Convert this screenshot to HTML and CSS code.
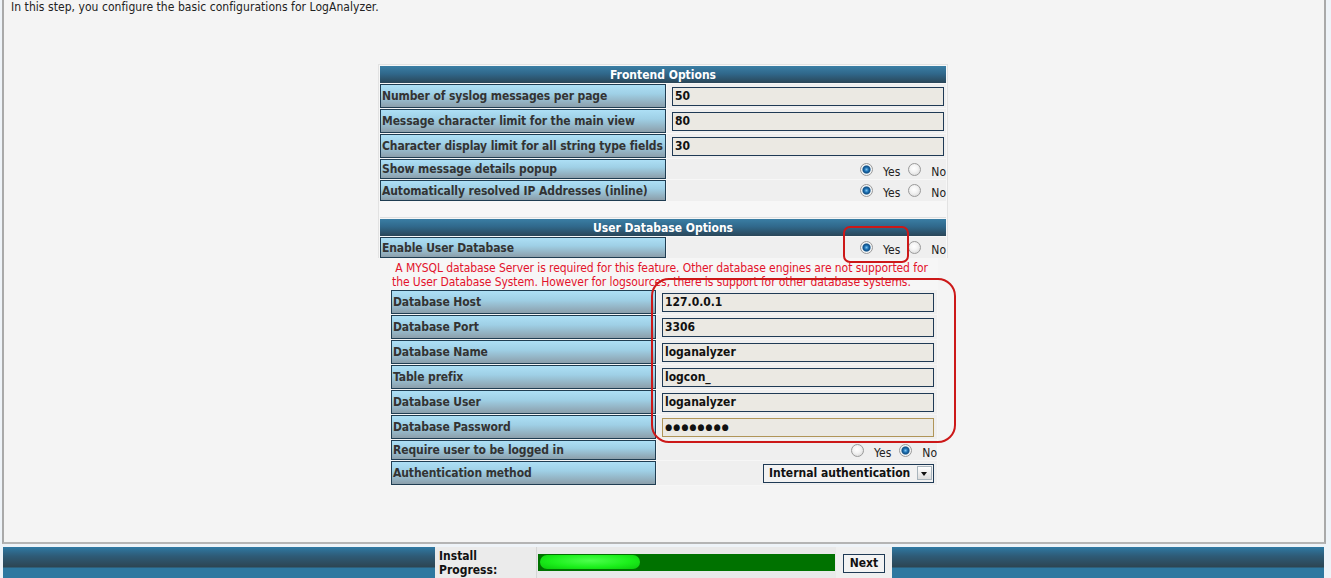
FILE: index.html
```html
<!DOCTYPE html>
<html>
<head>
<meta charset="utf-8">
<title>LogAnalyzer Install</title>
<link rel="stylesheet" href="styles.css">
</head>
<body>
<div class="panel">
  <p class="intro">In this step, you configure the basic configurations for LogAnalyzer.</p>
  <div class="wrap">
    <div class="box">
      <div class="hdr">Frontend Options</div>
      <div class="row"><div class="lbl">Number of syslog messages per page</div><div class="val"><span class="inp">50</span></div></div>
      <div class="row"><div class="lbl">Message character limit for the main view</div><div class="val"><span class="inp">80</span></div></div>
      <div class="row"><div class="lbl">Character display limit for all string type fields</div><div class="val"><span class="inp">30</span></div></div>
      <div class="row r20"><div class="lbl">Show message details popup</div><div class="val radios"><span class="rb on"></span><span class="t">Yes</span><span class="rb"></span><span class="t">No</span></div></div>
      <div class="row r21"><div class="lbl">Automatically resolved IP Addresses (inline)</div><div class="val radios"><span class="rb on"></span><span class="t">Yes</span><span class="rb"></span><span class="t">No</span></div></div>
      <div class="spacer"></div>
      <div class="hdr">User Database Options</div>
      <div class="row r21"><div class="lbl">Enable User Database</div><div class="val radios"><span class="rb on"></span><span class="t">Yes</span><span class="rb"></span><span class="t">No</span></div></div>
    </div>
    <div class="nested">
      <div class="warn">&nbsp;A MYSQL database Server is required for this feature. Other database engines are not supported for<br>the User Database System. However for logsources, there is support for other database systems.</div>
      <div class="row"><div class="lbl">Database Host</div><div class="val"><span class="inp">127.0.0.1</span></div></div>
      <div class="row"><div class="lbl">Database Port</div><div class="val"><span class="inp">3306</span></div></div>
      <div class="row"><div class="lbl">Database Name</div><div class="val"><span class="inp">loganalyzer</span></div></div>
      <div class="row"><div class="lbl">Table prefix</div><div class="val"><span class="inp">logcon_</span></div></div>
      <div class="row"><div class="lbl">Database User</div><div class="val"><span class="inp">loganalyzer</span></div></div>
      <div class="row"><div class="lbl">Database Password</div><div class="val"><span class="inp pw">&#9679;&#9679;&#9679;&#9679;&#9679;&#9679;&#9679;&#9679;</span></div></div>
      <div class="row r20"><div class="lbl">Require user to be logged in</div><div class="val radios"><span class="rb"></span><span class="t">Yes</span><span class="rb on"></span><span class="t">No</span></div></div>
      <div class="row"><div class="lbl">Authentication method</div><div class="val selcell"><span class="sel"><span class="seltext">Internal authentication</span><span class="arrow"></span></span></div></div>
    </div>
  </div>
</div>
<div class="footer">
  <div class="progress">
    <div class="plabel">Install<br>Progress:</div>
    <div class="pcell"><div class="bar"><div class="fill"></div></div></div>
    <div class="ncell"><span class="next">Next</span></div>
  </div>
</div>
<div class="mark m1"></div>
<div class="mark m2"></div>
</body>
</html>
```
FILE: styles.css
```css
html, body { margin: 0; padding: 0; }
body {
  background: #eef3f8;
  font-family: "DejaVu Sans Condensed", "DejaVu Sans", sans-serif;
  font-size: 12px;
  color: #222;
  position: relative;
  height: 578px;
  overflow: hidden;
}
.panel {
  margin: 0 5px 0 2px;
  height: 544px;
  box-sizing: border-box;
  border-left: 2px solid #a9a9a9;
  border-right: 2px solid #a9a9a9;
  border-bottom: 2px solid #b4b4b4;
  background: #f4f4f4;
}
.intro { margin: 0; padding-left: 7px; line-height: 14px; letter-spacing: 0.05px; }
.wrap { width: 572px; margin: 50px auto 0; }
.box {
  width: 570px;
  box-sizing: border-box;
  border: 1px solid #e2e2e2;
  border-bottom: none;
  padding: 1px 1px 0 1px;
  background: #f7f7f7;
  display: flex;
  flex-direction: column;
  gap: 1px;
}
.hdr {
  height: 17px;
  line-height: 18px;
  text-align: center;
  color: #fff;
  font-weight: bold;
  background: linear-gradient(to bottom, #3a7ea4 0%, #30688b 45%, #2a4658 100%);
}
.row { display: flex; gap: 1px; height: 24px; }
.row.r20 { height: 20px; }
.row.r21 { height: 21px; }
.lbl {
  width: 286px;
  flex: none;
  box-sizing: border-box;
  border: 1px solid #1f3d52;
  background: linear-gradient(to bottom, #addff5 0%, #9fd0e6 40%, #8c9fab 100%);
  padding-left: 1px;
  font-weight: bold;
  letter-spacing: -0.1px;
  color: #333;
  display: flex;
  align-items: center;
  white-space: nowrap;
  overflow: hidden;
}
.val {
  flex: 1;
  background: #efefef;
  display: flex;
  align-items: center;
  padding-left: 5px;
}
.inp {
  width: 272px;
  height: 19px;
  box-sizing: border-box;
  border: 1px solid #1f3a55;
  background: #ebe9e3;
  font-weight: bold;
  color: #111;
  line-height: 17px;
  padding-left: 2px;
  white-space: nowrap;
}
.inp.pw { border-color: #b09558; font-size: 9px; letter-spacing: 1px; }
.spacer { height: 15px; border-bottom: 1px solid #e0e0e0; }
.radios { justify-content: flex-end; padding-left: 0; }
.rb {
  width: 13px;
  height: 13px;
  box-sizing: border-box;
  border-radius: 50%;
  border: 1px solid #9a9a9a;
  background: radial-gradient(circle at 45% 40%, #ffffff 0, #f4f4f4 40%, #d2d2d2 100%);
  margin-left: 8px;
  flex: none;
}
.rb.on {
  background: radial-gradient(circle at 50% 50%, #7fc4f0 0, #1e72b4 2px, #104e84 3.5px, #d9e6ee 4.5px, #f6f6f6 5px, #d0d0d0 100%);
}
.t { margin-left: 10px; padding-top: 5px; color: #222; }
.nested {
  width: 548px;
  margin-left: 12px;
  box-sizing: border-box;
  padding: 0 1px 1px 1px;
  background: #f6f6f6;
  display: flex;
  flex-direction: column;
  gap: 1px;
}
.nested .lbl { width: 265px; }
.warn {
  color: #e3122b;
  line-height: 14px;
  padding: 3px 0 0 1px;
  letter-spacing: -0.08px;
  white-space: nowrap;
}
.selcell { justify-content: flex-end; padding-right: 3px; }
.sel {
  width: 171px;
  height: 19px;
  box-sizing: border-box;
  border: 1px solid #1f3a55;
  background: #f2f2f2;
  display: flex;
  align-items: center;
  justify-content: space-between;
  padding: 0 1px 0 5px;
}
.seltext { font-weight: bold; color: #111; white-space: nowrap; }
.arrow {
  width: 15px;
  height: 14px;
  box-sizing: border-box;
  border: 1px solid #a8b4bc;
  background: linear-gradient(to bottom, #ffffff, #dcdcdc);
  position: relative;
}
.arrow::after {
  content: "";
  position: absolute;
  left: 3px;
  top: 5px;
  border-left: 3.5px solid transparent;
  border-right: 3.5px solid transparent;
  border-top: 4px solid #111;
}
.footer {
  margin: 3px 7px 0 3px;
  height: 31px;
  background: linear-gradient(to bottom, #2f79a3 0px, #2e5b77 9px, #2d4552 20px, #2e78a0 21px, #2e78a0 100%);
  display: flex;
  justify-content: center;
}
.progress {
  width: 457px;
  display: flex;
  background: #ebebeb;
}
.plabel {
  width: 102px;
  box-sizing: border-box;
  border-right: 1px solid #d6d6d6;
  padding: 2px 0 0 4px;
  font-weight: bold;
  line-height: 14px;
  color: #111;
}
.pcell { width: 299px; box-sizing: border-box; padding: 7px 0 0 1px; background: #e9e9e9; }
.bar {
  width: 297px;
  height: 17px;
  box-sizing: border-box;
  background: #007200;
  padding: 1px 2px;
}
.fill {
  width: 100px;
  height: 14px;
  border-radius: 7px;
  background: radial-gradient(ellipse at 50% 40%, #4dff4d 0%, #1cf01c 55%, #0bc80b 100%);
}
.ncell {
  flex: 1;
  background: #efefef;
  padding: 7px 0 0 7px;
}
.next {
  display: inline-block;
  width: 42px;
  height: 19px;
  box-sizing: border-box;
  border: 1px solid #1f3a55;
  background: #f3f3f3;
  font-weight: bold;
  text-align: center;
  line-height: 17px;
  color: #111;
}
.mark {
  position: absolute;
  box-sizing: border-box;
  border: 2px solid #cc1818;
}
.m1 { left: 843px; top: 226px; width: 66px; height: 37px; border-radius: 7px; }
.m2 { left: 651px; top: 278px; width: 305px; height: 165px; border-radius: 18px; }
```
